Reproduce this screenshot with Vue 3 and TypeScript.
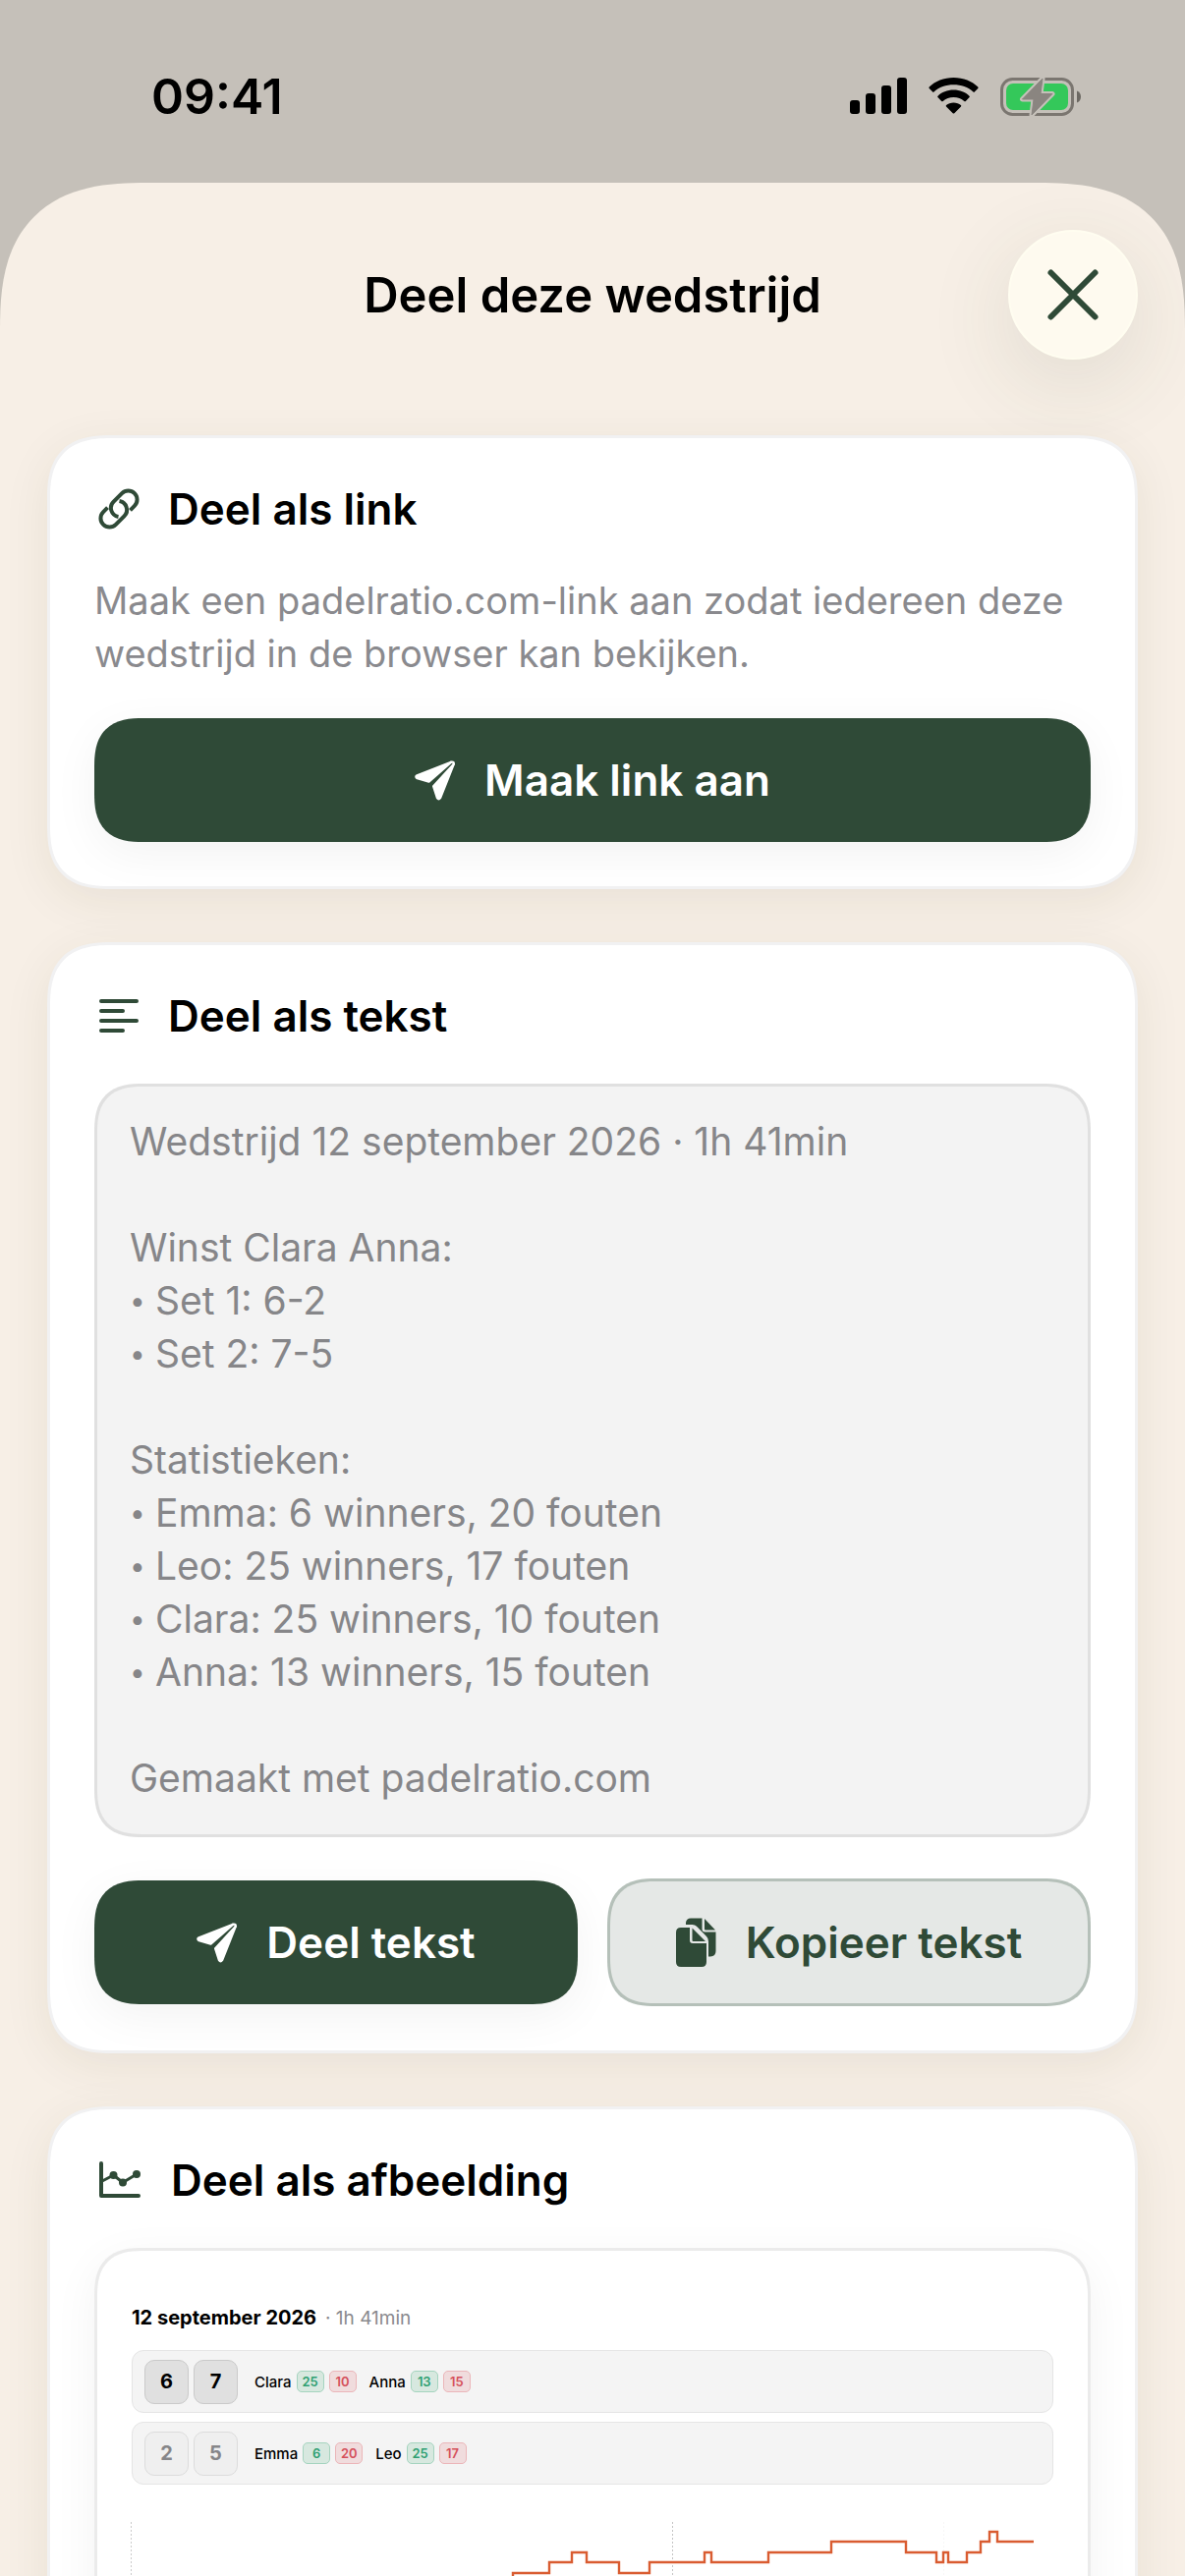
<script setup lang="ts">
interface Player {
  name: string
  winners: number
  faults: number
}

interface Team {
  won: boolean
  sets: number[]
  players: Player[]
}

interface SummaryLine {
  bullet?: boolean
  text: string
}

const summary: SummaryLine[] = [
  { text: 'Wedstrijd 12 september 2026 · 1h 41min' },
  { text: '' },
  { text: 'Winst Clara Anna:' },
  { bullet: true, text: 'Set 1: 6-2' },
  { bullet: true, text: 'Set 2: 7-5' },
  { text: '' },
  { text: 'Statistieken:' },
  { bullet: true, text: 'Emma: 6 winners, 20 fouten' },
  { bullet: true, text: 'Leo: 25 winners, 17 fouten' },
  { bullet: true, text: 'Clara: 25 winners, 10 fouten' },
  { bullet: true, text: 'Anna: 13 winners, 15 fouten' },
  { text: '' },
  { text: 'Gemaakt met padelratio.com' },
]

const teams: Team[] = [
  {
    won: true,
    sets: [6, 7],
    players: [
      { name: 'Clara', winners: 25, faults: 10 },
      { name: 'Anna', winners: 13, faults: 15 },
    ],
  },
  {
    won: false,
    sets: [2, 5],
    players: [
      { name: 'Emma', winners: 6, faults: 20 },
      { name: 'Leo', winners: 25, faults: 17 },
    ],
  },
]

// Score lead over time: [x, y] at the start of each horizontal run.
const steps: [number, number][] = [
  [388, 53], [425, 42], [448, 32], [463, 42], [496, 53], [527, 42],
  [583, 32], [590, 42], [648, 32], [712, 21], [788, 32], [819, 42],
  [826, 32], [831, 42], [850, 32], [864, 21], [873, 11], [881, 21],
]
const leadPath =
  'M388 180' + steps.map(([x, y]) => `H${x}V${y}`).join('') + 'H918'
</script>

<template>
  <div class="screen">
    <div class="status">
      <span class="status__time">09:41</span>
      <div class="status__icons">
        <svg width="58" height="38" viewBox="0 0 58 38" aria-hidden="true">
          <rect x="0" y="23" width="10" height="14" rx="3" />
          <rect x="16" y="16" width="10" height="21" rx="3" />
          <rect x="32" y="8" width="10" height="29" rx="3" />
          <rect x="48" y="0" width="10" height="37" rx="3" />
        </svg>
        <svg width="51" height="38" viewBox="0 0 51 38" aria-hidden="true">
          <path d="M25.500 0C35.500 0 44.300 3.600 50.300 9.600Q51 10.300 50.300 11L46.800 14.600Q46.200 15.200 45.500 14.600C40.300 9.700 33.200 7.300 25.500 7.300S10.700 9.700 5.500 14.600Q4.800 15.200 4.200 14.600L.7 11Q0 10.300.7 9.600C6.700 3.600 15.500 0 25.500 0Z" />
          <path d="M25.500 12.600C32 12.600 37.600 15 41.500 18.700Q42.300 19.400 41.600 20.100L37.800 23.900Q37.100 24.600 36.300 23.900C33.500 21.500 29.700 20.100 25.500 20.100S17.500 21.500 14.700 23.900Q13.900 24.600 13.200 23.900L9.400 20.100Q8.700 19.400 9.500 18.700C13.400 15 19 12.600 25.500 12.600Z" />
          <path d="M25.500 25.500C28.500 25.500 31 26.500 32.900 28Q33.700 28.700 33 29.400L26.300 36.200Q25.500 37 24.700 36.200L18 29.400Q17.300 28.700 18.100 28C20 26.500 22.500 25.500 25.500 25.500Z" />
        </svg>
        <svg width="83" height="41" viewBox="0 0 83 41" aria-hidden="true">
          <rect x="1.500" y="2.500" width="72" height="36" rx="11" fill="none" stroke="#7b7670" stroke-width="3" />
          <path d="M78 14.500C81 15.500 82 18 82 20.500S81 25.500 78 26.500Z" fill="#6c6862" />
          <rect x="6" y="7" width="63" height="27" rx="7" fill="#34c85a" />
          <path d="M43 2L22.500 23H34L32 39L53 17.500H41Z" fill="#8a8580" stroke="#c5c0b9" stroke-width="5" stroke-linejoin="round" />
          <path d="M43 2L22.500 23H34L32 39L53 17.500H41Z" fill="#8a8580" stroke="#8a8580" stroke-width="1" stroke-linejoin="round" />
        </svg>
      </div>
    </div>

    <main class="sheet">
      <header class="bar">
        <h1 class="bar__title">Deel deze wedstrijd</h1>
        <button class="close" type="button" aria-label="Sluiten">
          <svg width="54" height="54" viewBox="0 0 54 54" aria-hidden="true">
            <path d="M4.500 4.500L49.500 49.500M49.500 4.500L4.500 49.500" fill="none" stroke="currentColor" stroke-width="6" stroke-linecap="round" />
          </svg>
        </button>
      </header>

      <div class="cards">
        <section class="card card--link">
          <h2 class="card__title">
            <svg width="50" height="42" viewBox="-4 0 50 42" aria-hidden="true">
              <g fill="none" stroke="currentColor" stroke-width="4">
                <path d="M32.500 22.300L36.900 17.900A9 9 0 0 0 24.100 5.100L15.600 13.600A9 9 0 0 0 20.500 28.900" />
                <path d="M9.500 19.700L5.100 24.100A9 9 0 0 0 17.900 36.900L26.400 28.400A9 9 0 0 0 21.500 13.100" />
              </g>
            </svg>
            Deel als link
          </h2>
          <p class="card__text">Maak een padelratio.com-link aan zodat iedereen deze wedstrijd in de browser kan bekijken.</p>
          <button class="btn" type="button">
            <svg width="41" height="41" viewBox="0 0 41 41" aria-hidden="true">
              <g fill="currentColor" stroke="currentColor" stroke-width="2.400" stroke-linejoin="round">
                <path d="M37 1.800L2.500 15.300Q.2 16.600 2.600 18.200L14.500 21.600Z" />
                <path d="M39.600 4L26 38.200Q24.500 40.600 23 38.200L19.200 26.300Z" />
                <path d="M36.500 1.900Q40.600 .6 39.600 4.500" fill="none" />
              </g>
            </svg>
            Maak link aan
          </button>
        </section>

        <section class="card">
          <h2 class="card__title">
            <svg width="50" height="36" viewBox="-5 0 50 36" aria-hidden="true">
              <path d="M2 3H38M2 13H24M2 23H38M2 33H24" fill="none" stroke="currentColor" stroke-width="4" stroke-linecap="round" />
            </svg>
            Deel als tekst
          </h2>
          <div class="summary">
            <p v-for="(line, i) in summary" :key="i" class="summary__line">
              <span v-if="line.bullet" class="summary__bullet">• </span>{{ line.text }}
            </p>
          </div>
          <div class="actions">
            <button class="btn" type="button">
              <svg width="41" height="41" viewBox="0 0 41 41" aria-hidden="true">
                <g fill="currentColor" stroke="currentColor" stroke-width="2.400" stroke-linejoin="round">
                  <path d="M37 1.800L2.500 15.300Q.2 16.600 2.600 18.200L14.500 21.600Z" />
                  <path d="M39.600 4L26 38.200Q24.500 40.600 23 38.200L19.200 26.300Z" />
                  <path d="M36.500 1.900Q40.600 .6 39.600 4.500" fill="none" />
                </g>
              </svg>
              Deel tekst
            </button>
            <button class="btn btn--soft" type="button">
              <svg width="41" height="50" viewBox="0 0 41 50" aria-hidden="true">
                <g fill="currentColor">
                  <path d="M10 7V5Q10.500 .5 15 .5H26.500V11.500Q26.500 14.500 29.500 14.500H40.500V34Q40.500 39 35 39.500H33V24Q33 21 31 19L21 8.800Q19.300 7 16.500 7Z" />
                  <path d="M29 1L40 12.500H30Q29 12.500 29 11.500Z" />
                  <path d="M5 10H14V23Q14 26 17 26H31V45Q31 50 26 50H5Q0 50 0 45V15Q0 10 5 10Z" />
                  <path d="M16.500 10.500L30 24H17.500Q16.500 24 16.500 23Z" />
                </g>
              </svg>
              Kopieer tekst
            </button>
          </div>
        </section>

        <section class="card">
          <h2 class="card__title">
            <svg width="53" height="38" viewBox="-5 0 53 38" aria-hidden="true">
              <g fill="none" stroke="currentColor" stroke-linejoin="round" stroke-linecap="round">
                <path d="M2 2V35H40" stroke-width="4" />
                <path d="M4 19.500L14.500 14L24 21.500L38 13" stroke-width="3" />
              </g>
              <g fill="currentColor">
                <circle cx="14.500" cy="14" r="4" />
                <circle cx="24" cy="21.500" r="4" />
                <circle cx="38" cy="13" r="4" />
              </g>
            </svg>
            Deel als afbeelding
          </h2>
          <div class="preview">
            <p class="preview__date"><strong>12 september 2026</strong><span>· 1h 41min</span></p>
            <div class="teams">
              <div v-for="(team, i) in teams" :key="i" class="team" :class="{ 'team--won': team.won }">
                <span v-for="(games, s) in team.sets" :key="s" class="team__set">{{ games }}</span>
                <div class="team__players">
                  <span v-for="player in team.players" :key="player.name" class="player">
                    <span class="player__name">{{ player.name }}</span>
                    <span class="chip chip--good">{{ player.winners }}</span>
                    <span class="chip chip--bad">{{ player.faults }}</span>
                  </span>
                </div>
              </div>
            </div>
            <svg class="chart" viewBox="0 0 938 180" aria-hidden="true">
              <g fill="none" stroke-dasharray="2 2">
                <path d="M-.5 1V180" stroke="#cbcbcb" />
                <path d="M550.500 1V180" stroke="#c4c4c4" />
                <path d="M826.500 1V180" stroke="#f6f6f6" />
              </g>
              <path :d="leadPath" fill="none" stroke="#d95c31" stroke-width="2.400" />
            </svg>
          </div>
        </section>
      </div>
    </main>
  </div>
</template>

<style>
html,
body {
  margin: 0;
  background: #c5c0b9;
}
</style>

<style scoped>
.screen {
  --green: #2f4a37;
  display: flex;
  flex-direction: column;
  height: 100vh;
  overflow: hidden;
  background: #c5c0b9;
  color: #000;
  font-family: Inter, "Liberation Sans", sans-serif;
}

.status {
  flex: none;
  display: flex;
  align-items: center;
  justify-content: space-between;
  box-sizing: border-box;
  height: 186px;
  padding: 10px 105px 0 154px;
}

.status__time {
  font-size: 50px;
  font-weight: 600;
  line-height: 60px;
}

.status__icons {
  display: flex;
  align-items: center;
  gap: 22px;
}

.sheet {
  flex: 1;
  min-height: 0;
  overflow: hidden;
  border-radius: 116px 116px 0 0;
  background: #f7efe6;
}

.bar {
  display: grid;
  grid-template-columns: 132px 1fr 132px;
  align-items: center;
  padding: 48px 48px 0;
}

.bar__title {
  grid-column: 2;
  margin: 0;
  padding-top: 2px;
  text-align: center;
  font-size: 49px;
  font-weight: 600;
  line-height: 60px;
}

.close {
  display: grid;
  place-items: center;
  height: 132px;
  padding: 0;
  border: 2px solid #fffdf0;
  border-radius: 50%;
  background: #fefaef;
  color: var(--green);
  box-shadow: 0 24px 90px rgba(60, 70, 40, 0.12);
}

.cards {
  display: flex;
  flex-direction: column;
  gap: 54px;
  padding: 77px 48px 48px;
}

.card {
  display: flex;
  flex-direction: column;
  gap: 42px;
  padding: 45px;
  border: 3px solid #f1f1f2;
  border-radius: 54px;
  background: #fff;
  box-shadow: 0 12px 48px rgba(60, 70, 20, 0.08);
}

.card--link {
  gap: 39px;
}

.card__title {
  display: flex;
  align-items: center;
  gap: 25px;
  margin: 0;
  font-size: 44px;
  font-weight: 600;
  line-height: 54px;
}

.card__title svg {
  flex: none;
  color: var(--green);
}

.card__text {
  margin: 0;
  color: #8a8a8e;
  font-size: 38px;
  line-height: 54px;
}

.btn {
  display: flex;
  align-items: center;
  justify-content: center;
  gap: 30px;
  height: 126px;
  padding: 0;
  border: 0;
  border-radius: 42px;
  background: var(--green);
  color: #fff;
  font-family: inherit;
  font-size: 44px;
  font-weight: 600;
  line-height: 54px;
  box-shadow: 0 12px 48px rgba(0, 0, 0, 0.05);
}

.btn--soft {
  height: 130px;
  border: 3px solid #b5c0b9;
  background: #e5e8e6;
  color: var(--green);
  box-shadow: none;
}

.summary {
  padding: 29px 33px 30px;
  border: 3px solid #e0e0e0;
  border-radius: 42px;
  background: #f3f3f3;
  color: #868689;
  font-size: 39px;
  line-height: 54px;
}

.summary__line {
  display: flex;
  align-items: center;
  height: 54px;
  margin: 0;
}

.summary__bullet {
  flex: none;
  width: 26px;
  font-size: 28px;
}

.actions {
  display: grid;
  grid-template-columns: 1fr 1fr;
  align-items: center;
  gap: 30px;
}

.preview {
  padding: 56px 35px 35px;
  border: 3px solid #ebebeb;
  border-radius: 42px;
  background: #fff;
  box-shadow: 0 12px 48px rgba(0, 0, 0, 0.05);
}

.preview__date {
  display: flex;
  align-items: baseline;
  gap: 9px;
  margin: 0 0 20px;
  color: #8a8a8e;
  font-size: 19px;
  line-height: 24px;
}

.preview__date strong {
  color: #000;
  font-size: 20px;
  font-weight: 700;
}

.teams {
  display: flex;
  flex-direction: column;
  gap: 9px;
}

.team {
  display: flex;
  align-items: center;
  gap: 5px;
  box-sizing: border-box;
  height: 64px;
  padding: 0 12px;
  border: 1px solid #e5e5e5;
  border-radius: 12px;
  background: #f4f4f4;
}

.team__set {
  display: grid;
  place-items: center;
  box-sizing: border-box;
  width: 45px;
  height: 45px;
  border: 1px solid #dcdcdc;
  border-radius: 10px;
  background: #efefef;
  color: #868689;
  font-size: 20px;
  font-weight: 700;
}

.team--won .team__set {
  border-color: #cacaca;
  background: #e0e0e0;
  color: #000;
}

.team__players {
  display: flex;
  gap: 13px;
  margin-left: 12px;
}

.player {
  display: flex;
  align-items: center;
  gap: 5px;
}

.player__name {
  font-size: 15px;
  font-weight: 500;
}

.chip {
  display: grid;
  place-items: center;
  box-sizing: border-box;
  width: 28px;
  height: 22px;
  border: 1px solid;
  border-radius: 5px;
  font-size: 13px;
  font-weight: 600;
}

.chip--good {
  border-color: #a5d4bf;
  background: #d7e8df;
  color: #2fa072;
}

.chip--bad {
  border-color: #ebb6b9;
  background: #f0dcdd;
  color: #d5505a;
}

.chart {
  display: block;
  width: 100%;
  margin-top: 37px;
  overflow: visible;
}

/* Continuous corners where the browser can draw them. */
@supports (corner-shape: superellipse(1.4)) {
  .sheet {
    border-radius: 150px 150px 0 0;
    corner-shape: superellipse(1.4);
  }

  .card {
    border-radius: 66px;
    corner-shape: superellipse(1.4);
  }

  .btn,
  .summary,
  .preview {
    border-radius: 50px;
    corner-shape: superellipse(1.4);
  }
}
</style>
